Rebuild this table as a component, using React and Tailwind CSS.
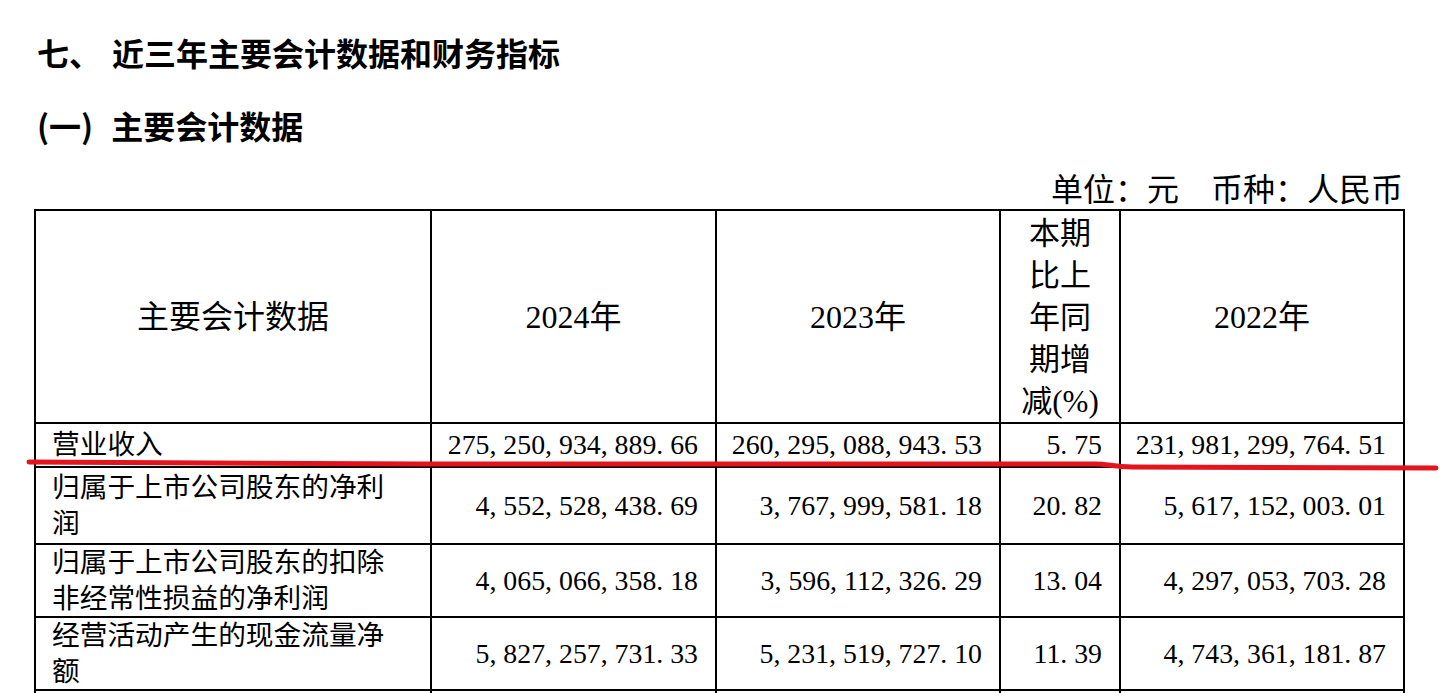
import React from "react";

const rows = [
  {
    label: "营业收入",
    v: ["275,250,934,889.66", "260,295,088,943.53", "5.75", "231,981,299,764.51"],
  },
  {
    label: "归属于上市公司股东的净利润",
    v: ["4,552,528,438.69", "3,767,999,581.18", "20.82", "5,617,152,003.01"],
  },
  {
    label: "归属于上市公司股东的扣除非经常性损益的净利润",
    v: ["4,065,066,358.18", "3,596,112,326.29", "13.04", "4,297,053,703.28"],
  },
  {
    label: "经营活动产生的现金流量净额",
    v: ["5,827,257,731.33", "5,231,519,727.10", "11.39", "4,743,361,181.87"],
  },
];

function Num({ v }) {
  return (
    <span className="whitespace-nowrap">
      {v.split("").map((c, i) =>
        c === "," || c === "." ? (
          <span key={i} className="inline-block w-[13.9px] text-left">
            {c}
          </span>
        ) : (
          <span key={i}>{c}</span>
        )
      )}
    </span>
  );
}

export default function App() {
  return (
    <div className="relative h-[693px] w-[1440px] overflow-hidden bg-white text-black">
      <div className="pl-[34px] font-['Liberation_Serif','Noto_Sans_CJK_SC',serif]">
        <div className="ml-[3px] pt-[36px] text-[32px] leading-[32px] font-bold font-['Noto_Sans_CJK_SC',sans-serif] whitespace-nowrap">
          <span>七、</span>
          <span className="ml-[11px]">近三年主要会计数据和财务指标</span>
        </div>
        <div className="ml-[3px] mt-[41px] text-[32px] leading-[32px] font-bold font-['Noto_Sans_CJK_SC',sans-serif] whitespace-nowrap">
          <span>(一)</span>
          <span className="ml-[18px]">主要会计数据</span>
        </div>
        <div className="mt-[30px] w-[1371px] pr-[2px] text-right text-[32px] leading-[32px] font-['Noto_Sans_CJK_SC',sans-serif] whitespace-nowrap">
          单位：元　币种：人民币
        </div>
        <div className="mt-[6px] grid w-[1371px] grid-cols-[394px_283px_282px_118px_282px] grid-rows-[211px_42px_75px_71px_71px_73px] gap-[2px] bg-black p-[2px]">
          <div className="flex items-center justify-center bg-white text-[32px]">
            主要会计数据
          </div>
          <div className="flex items-center justify-center bg-white text-[32px]">2024年</div>
          <div className="flex items-center justify-center bg-white text-[32px]">2023年</div>
          <div className="flex items-center justify-center bg-white text-center text-[31px] leading-[42px]">
            <div className="pt-[2px]">
              本期
              <br />
              比上
              <br />
              年同
              <br />
              期增
              <br />
              减(%)
            </div>
          </div>
          <div className="flex items-center justify-center bg-white text-[32px]">2022年</div>

          {rows.map((r, ri) => (
            <React.Fragment key={ri}>
              <div className="flex items-center bg-white pl-[16px] text-[27.7px] leading-[36px]">
                <div className="w-[336px]">{r.label}</div>
              </div>
              {r.v.map((val, vi) => (
                <div
                  key={vi}
                  className="flex items-center justify-end bg-white pr-[17px] text-[27.8px] leading-[36px]"
                >
                  <Num v={val} />
                </div>
              ))}
            </React.Fragment>
          ))}
          <div className="bg-white" />
          <div className="bg-white" />
          <div className="bg-white" />
          <div className="bg-white" />
          <div className="bg-white" />
        </div>
      </div>

      <svg
        className="pointer-events-none absolute left-0 top-0"
        width="1440"
        height="693"
        viewBox="0 0 1440 693"
      >
        <path
          d="M29 462 C 60 463, 200 464, 420 464 L 1095 464 C 1108 464, 1114 467, 1132 467 L 1436 468"
          fill="none"
          stroke="#e3141b"
          strokeWidth="5"
          strokeLinecap="round"
          strokeLinejoin="round"
        />
      </svg>
    </div>
  );
}
